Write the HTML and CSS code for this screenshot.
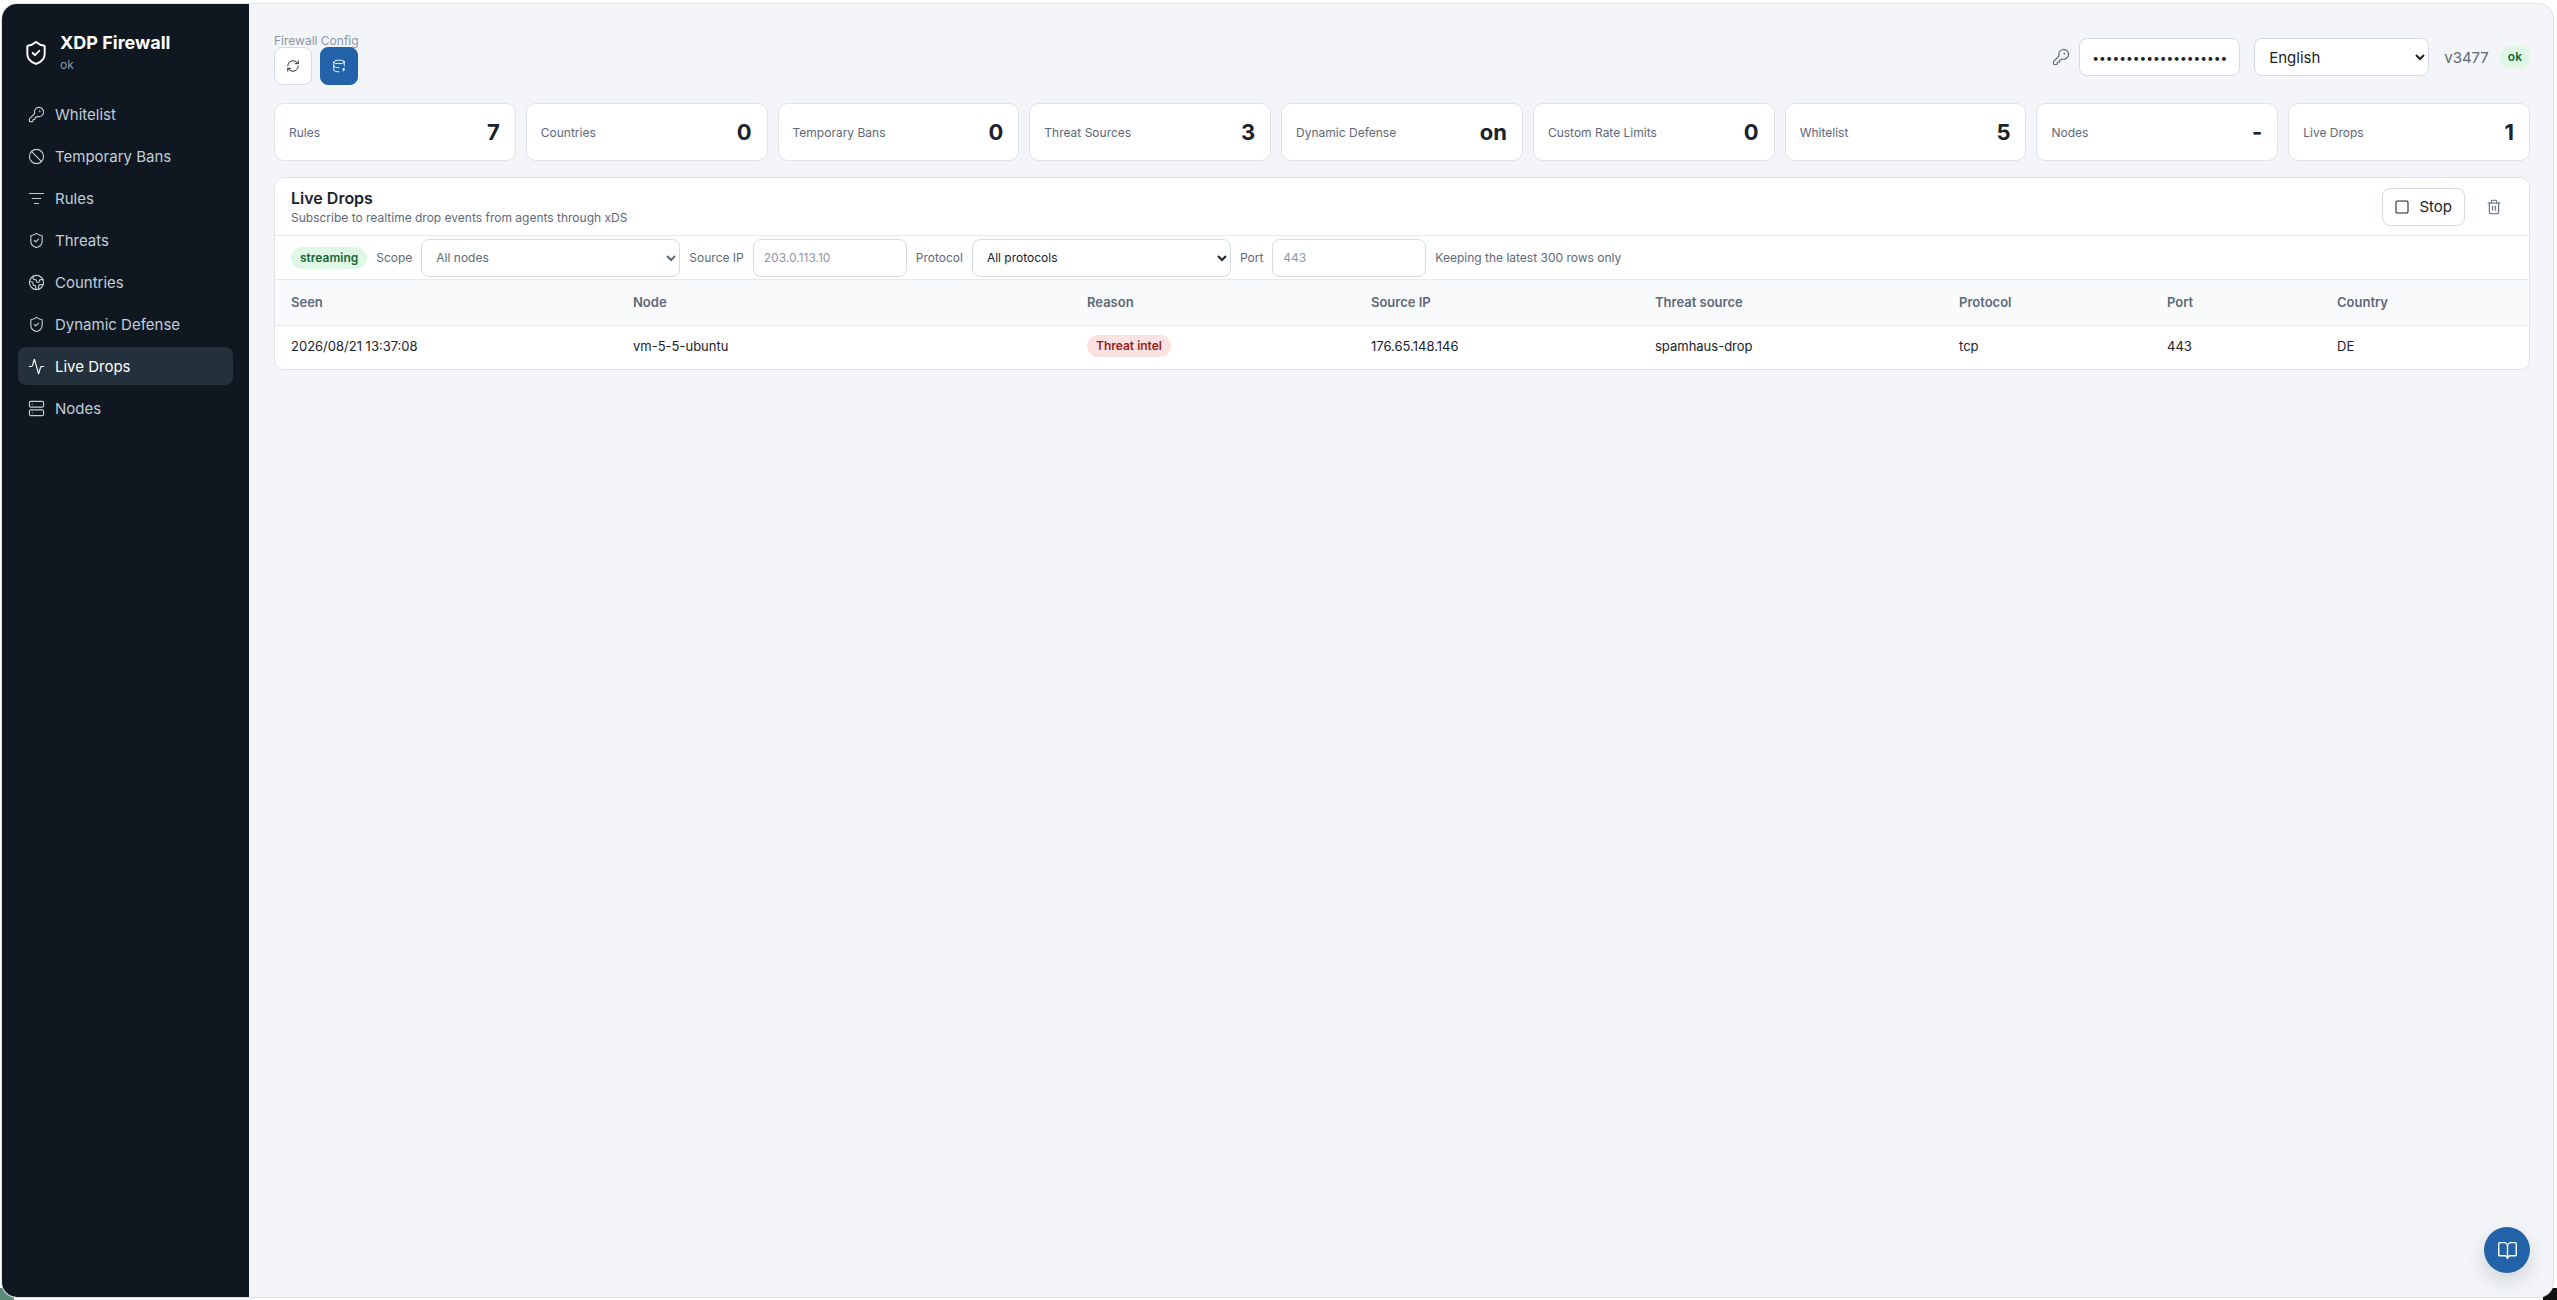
FILE: index.html
```html
<!DOCTYPE html>
<html lang="en">

<head>
    <meta charset="utf-8">
    <title>XDP Firewall</title>
    <link rel="stylesheet" href="styles.css">
</head>

<body>
    <div class="window">
        <aside class="sidebar">
            <div class="brand">
                <svg class="brand-icon" viewBox="0 0 24 24"><path d="M20 13c0 5-3.5 7.5-7.66 8.95a1 1 0 0 1-.67-.01C7.5 20.5 4 18 4 13V6a1 1 0 0 1 1-1c2 0 4.5-1.2 6.24-2.72a1.17 1.17 0 0 1 1.52 0C14.51 3.81 17 5 19 5a1 1 0 0 1 1 1z"/><path d="m9 12 2 2 4-4"/></svg>
                <div>
                    <div class="brand-name">XDP Firewall</div>
                    <div class="brand-status">ok</div>
                </div>
            </div>
            <nav class="nav">
                <a class="nav-item"><svg viewBox="0 0 24 24"><path d="M2.586 17.414A2 2 0 0 0 2 18.828V21a1 1 0 0 0 1 1h3a1 1 0 0 0 1-1v-1a1 1 0 0 1 1-1h1a1 1 0 0 0 1-1v-1a1 1 0 0 1 1-1h.172a2 2 0 0 0 1.414-.586l.814-.814a6.5 6.5 0 1 0-4-4z"/><circle cx="16.5" cy="7.5" r=".5"/></svg>Whitelist</a>
                <a class="nav-item"><svg viewBox="0 0 24 24"><circle cx="12" cy="12" r="10"/><path d="m4.9 4.9 14.2 14.2"/></svg>Temporary Bans</a>
                <a class="nav-item"><svg viewBox="0 0 24 24"><path d="M2 5h20"/><path d="M6 12h12"/><path d="M9 19h6"/></svg>Rules</a>
                <a class="nav-item"><svg viewBox="0 0 24 24"><path d="M20 13c0 5-3.5 7.5-7.66 8.95a1 1 0 0 1-.67-.01C7.5 20.5 4 18 4 13V6a1 1 0 0 1 1-1c2 0 4.5-1.2 6.24-2.72a1.17 1.17 0 0 1 1.52 0C14.51 3.81 17 5 19 5a1 1 0 0 1 1 1z"/><path d="m9 12 2 2 4-4"/></svg>Threats</a>
                <a class="nav-item"><svg viewBox="0 0 24 24"><circle cx="12" cy="12" r="10"/><path d="M21.54 15H17a2 2 0 0 0-2 2v4.54"/><path d="M7 3.34V5a3 3 0 0 0 3 3a2 2 0 0 1 2 2c0 1.1.9 2 2 2a2 2 0 0 0 2-2c0-1.1.9-2 2-2h3.17"/><path d="M11 21.95V18a2 2 0 0 0-2-2a2 2 0 0 1-2-2v-1a2 2 0 0 0-2-2H2.05"/></svg>Countries</a>
                <a class="nav-item"><svg viewBox="0 0 24 24"><path d="M20 13c0 5-3.5 7.5-7.66 8.95a1 1 0 0 1-.67-.01C7.5 20.5 4 18 4 13V6a1 1 0 0 1 1-1c2 0 4.5-1.2 6.24-2.72a1.17 1.17 0 0 1 1.52 0C14.51 3.81 17 5 19 5a1 1 0 0 1 1 1z"/><path d="m9 12 2 2 4-4"/></svg>Dynamic Defense</a>
                <a class="nav-item active"><svg viewBox="0 0 24 24"><path d="M22 12h-2.48a2 2 0 0 0-1.93 1.46l-2.35 8.36a.25.25 0 0 1-.48 0L9.24 2.18a.25.25 0 0 0-.48 0l-2.35 8.36A2 2 0 0 1 4.49 12H2"/></svg>Live Drops</a>
                <a class="nav-item"><svg viewBox="0 0 24 24"><rect width="20" height="8" x="2" y="2" rx="2"/><rect width="20" height="8" x="2" y="14" rx="2"/><path d="M6 6h.01"/><path d="M6 18h.01"/></svg>Nodes</a>
            </nav>
        </aside>

        <main class="main">
            <header class="topbar">
                <div>
                    <div class="config-label">Firewall Config</div>
                    <div class="config-buttons">
                        <button class="icon-btn"><svg viewBox="0 0 24 24"><path d="M3 12a9 9 0 0 1 9-9 9.75 9.75 0 0 1 6.74 2.74L21 8"/><path d="M21 3v5h-5"/><path d="M21 12a9 9 0 0 1-9 9 9.75 9.75 0 0 1-6.74-2.74L3 16"/><path d="M8 16H3v5"/></svg></button>
                        <button class="icon-btn primary"><svg viewBox="0 0 24 24"><ellipse cx="12" cy="5" rx="9" ry="3"/><path d="M3 5v14a9 3 0 0 0 9 3"/><path d="M21 5v6"/><path d="M3 12a9 3 0 0 0 9 3"/><path d="m21 15-3 3h4l-3 3"/></svg></button>
                    </div>
                </div>
                <div class="topbar-right">
                    <svg class="key-icon" viewBox="0 0 24 24"><path d="M2.586 17.414A2 2 0 0 0 2 18.828V21a1 1 0 0 0 1 1h3a1 1 0 0 0 1-1v-1a1 1 0 0 1 1-1h1a1 1 0 0 0 1-1v-1a1 1 0 0 1 1-1h.172a2 2 0 0 0 1.414-.586l.814-.814a6.5 6.5 0 1 0-4-4z"/><circle cx="16.5" cy="7.5" r=".5"/></svg>
                    <input class="field token" type="password" value="xxxxxxxxxxxxxxxxxxxx">
                    <select class="field lang"><option>English</option></select>
                    <span class="version">v3477</span>
                    <span class="pill ok small">ok</span>
                </div>
            </header>

            <section class="stats">
                <div class="stat"><span>Rules</span><b>7</b></div>
                <div class="stat"><span>Countries</span><b>0</b></div>
                <div class="stat"><span>Temporary Bans</span><b>0</b></div>
                <div class="stat"><span>Threat Sources</span><b>3</b></div>
                <div class="stat"><span>Dynamic Defense</span><b>on</b></div>
                <div class="stat"><span>Custom Rate Limits</span><b>0</b></div>
                <div class="stat"><span>Whitelist</span><b>5</b></div>
                <div class="stat"><span>Nodes</span><b>-</b></div>
                <div class="stat"><span>Live Drops</span><b>1</b></div>
            </section>

            <section class="panel">
                <div class="panel-head">
                    <div>
                        <h2>Live Drops</h2>
                        <p>Subscribe to realtime drop events from agents through xDS</p>
                    </div>
                    <div class="panel-actions">
                        <button class="stop-btn"><svg viewBox="0 0 24 24"><rect width="18" height="18" x="3" y="3" rx="2"/></svg>Stop</button>
                        <button class="trash-btn"><svg viewBox="0 0 24 24"><path d="M10 11v6"/><path d="M14 11v6"/><path d="M19 6v14a2 2 0 0 1-2 2H7a2 2 0 0 1-2-2V6"/><path d="M3 6h18"/><path d="M8 6V4a2 2 0 0 1 2-2h4a2 2 0 0 1 2 2v2"/></svg></button>
                    </div>
                </div>
                <div class="filters">
                    <span class="pill ok">streaming</span>
                    <label>Scope</label>
                    <select class="field filter-select muted"><option>All nodes</option></select>
                    <label>Source IP</label>
                    <input class="field filter-input" placeholder="203.0.113.10">
                    <label>Protocol</label>
                    <select class="field filter-select"><option>All protocols</option></select>
                    <label>Port</label>
                    <input class="field filter-input" placeholder="443">
                    <label class="hint">Keeping the latest 300 rows only</label>
                </div>
                <table class="drops">
                    <thead>
                        <tr>
                            <th class="col-seen">Seen</th>
                            <th class="col-node">Node</th>
                            <th class="col-reason">Reason</th>
                            <th class="col-ip">Source IP</th>
                            <th class="col-threat">Threat source</th>
                            <th class="col-proto">Protocol</th>
                            <th class="col-port">Port</th>
                            <th>Country</th>
                        </tr>
                    </thead>
                    <tbody>
                        <tr>
                            <td>2026/08/21 13:37:08</td>
                            <td>vm-5-5-ubuntu</td>
                            <td><span class="pill danger">Threat intel</span></td>
                            <td>176.65.148.146</td>
                            <td>spamhaus-drop</td>
                            <td>tcp</td>
                            <td>443</td>
                            <td>DE</td>
                        </tr>
                    </tbody>
                </table>
            </section>

            <button class="help-btn"><svg viewBox="0 0 24 24"><path d="M12 7v14"/><path d="M3 18a1 1 0 0 1-1-1V4a1 1 0 0 1 1-1h5a4 4 0 0 1 4 4 4 4 0 0 1 4-4h5a1 1 0 0 1 1 1v13a1 1 0 0 1-1 1h-6a3 3 0 0 0-3 3 3 3 0 0 0-3-3z"/></svg></button>
        </main>
    </div>
</body>

</html>
```

FILE: styles.css
```css
* {
    box-sizing: border-box;
}

html,
body {
    height: 100%;
}

body {
    margin: 0;
    padding: 4px 4px 3px 2px;
    /* bits of the desktop showing at the bottom corners */
    background:
        linear-gradient(#5c8b78, #5c8b78) left bottom / 14px 12px no-repeat,
        linear-gradient(#111, #111) right bottom / 14px 12px no-repeat,
        #fff;
    font-family: Inter, "Liberation Sans", sans-serif;
    color: #1a222c;
    overflow: hidden;
}

svg {
    fill: none;
    stroke: currentColor;
    stroke-width: 2;
    stroke-linecap: round;
    stroke-linejoin: round;
}

.window {
    position: relative;
    display: flex;
    height: 100%;
    background: #f3f5f8;
    border-radius: 15px;
    overflow: hidden;
    box-shadow: 0 0 0 1px #dfe2e6;
}

.sidebar {
    flex: none;
    width: 247px;
    padding: 27px 16px;
    background: #0f1821;
    color: #c3ccd8;
}

.brand {
    display: flex;
    align-items: center;
    gap: 11px;
    height: 44px;
    padding-left: 5px;
    margin-bottom: 20px;
}

.brand-icon {
    width: 26px;
    height: 26px;
    stroke-width: 1.8;
    color: #fff;
}

.brand-name {
    font-size: 18px;
    line-height: 24px;
    font-weight: 700;
    color: #fff;
}

.brand-status {
    font-size: 12px;
    line-height: 20px;
    color: #8c97a5;
}

.nav {
    display: flex;
    flex-direction: column;
    gap: 4px;
}

.nav-item {
    display: flex;
    align-items: center;
    gap: 10px;
    height: 38px;
    padding-left: 10px;
    border-radius: 8px;
    font-size: 15px;
}

.nav-item svg {
    width: 17px;
    height: 17px;
    stroke-width: 1.6;
}

.nav-item.active {
    background: #24313d;
    color: #fff;
}

.main {
    flex: 1;
    min-width: 0;
    padding: 30px 23px 0 25px;
    position: relative;
}

.topbar {
    display: flex;
    justify-content: space-between;
    height: 51px;
    margin-bottom: 18px;
}

.config-label {
    font-size: 12px;
    line-height: 13px;
    color: #8c97a5;
}

.config-buttons {
    display: flex;
    gap: 8px;
}

.icon-btn {
    display: flex;
    align-items: center;
    justify-content: center;
    width: 38px;
    height: 38px;
    padding: 0;
    background: #fff;
    border: 1px solid #d5dbe3;
    border-radius: 8px;
    color: #1a222c;
}

.icon-btn svg {
    width: 14px;
    height: 14px;
    stroke-width: 1.6;
}

.icon-btn.primary {
    background: #2262a8;
    border-color: #2262a8;
    color: #fff;
}

.topbar-right {
    display: flex;
    align-items: center;
    align-self: flex-start;
    padding-top: 4px;
}

.key-icon {
    width: 18px;
    height: 18px;
    margin-right: 9px;
    stroke-width: 1.6;
    color: #5d6977;
}

.field {
    height: 38px;
    background: #fff;
    border: 1px solid #d5dbe3;
    border-radius: 8px;
    font-family: inherit;
    color: #1a222c;
}

.token {
    width: 161px;
    padding: 0 8px 0 12px;
    margin-right: 14px;
    font-size: 12px;
}

.lang {
    width: 175px;
    padding: 0 8px 0 10px;
    margin-right: 15px;
    font-size: 15px;
}

.version {
    margin-right: 11px;
    font-size: 15px;
    color: #5d6977;
}

.pill {
    display: inline-block;
    border-radius: 999px;
    font-size: 12px;
    line-height: 22px;
    padding: 0 9px;
    font-weight: 600;
}

.pill.ok {
    background: #dff8e6;
    color: #166534;
}

.pill.small {
    padding: 0 8px;
}

.pill.danger {
    background: #fbe2e2;
    color: #991b1b;
}

.stats {
    display: grid;
    grid-template-columns: repeat(9, 1fr);
    gap: 10px;
    margin-bottom: 16px;
}

.stat {
    display: flex;
    justify-content: space-between;
    align-items: center;
    height: 58px;
    padding: 0 15px 0 14px;
    background: #fff;
    border: 1px solid #dfe3e8;
    border-radius: 10px;
}

.stat span {
    font-size: 12px;
    color: #5d6977;
}

.stat b {
    font-size: 22px;
    font-weight: 700;
}

.panel {
    background: #fff;
    border: 1px solid #dfe3e8;
    border-radius: 10px;
    overflow: hidden;
}

.panel-head {
    display: flex;
    justify-content: space-between;
    align-items: center;
    height: 58px;
    padding: 0 16px;
    border-bottom: 1px solid #e6e9ee;
}

.panel-head h2 {
    margin: 0;
    font-size: 16px;
    line-height: 22px;
    font-weight: 600;
}

.panel-head p {
    margin: 0;
    font-size: 12px;
    line-height: 18px;
    color: #5d6977;
}

.panel-actions {
    display: flex;
    align-items: center;
    gap: 10px;
}

.stop-btn {
    display: flex;
    align-items: center;
    gap: 9px;
    height: 38px;
    padding: 0 12px 0 11px;
    background: #fff;
    border: 1px solid #d5dbe3;
    border-radius: 8px;
    font-family: inherit;
    font-size: 15px;
    color: #1a222c;
}

.stop-btn svg {
    width: 16px;
    height: 16px;
    stroke-width: 1.6;
}

.trash-btn {
    display: flex;
    align-items: center;
    justify-content: center;
    width: 38px;
    height: 38px;
    padding: 0;
    background: none;
    border: 0;
    color: #5d6977;
}

.trash-btn svg {
    width: 16px;
    height: 16px;
    stroke-width: 1.6;
}

.filters {
    display: flex;
    align-items: center;
    gap: 9px;
    height: 44px;
    padding: 0 16px;
    border-bottom: 1px solid #e6e9ee;
}

.filters label {
    font-size: 12px;
    color: #5d6977;
}

.filter-select {
    width: 259px;
    padding: 0 4px 0 10px;
    font-size: 12px;
}

.filter-select.muted {
    color: #5d6977;
}

.filter-input {
    width: 154px;
    padding: 0 10px;
    font-size: 12px;
}

.filter-input::placeholder {
    color: #8c97a5;
}

.drops {
    width: 100%;
    border-collapse: collapse;
    table-layout: fixed;
    font-size: 13px;
}

.drops th {
    height: 45px;
    padding: 0 16px;
    background: #f9fafc;
    border-bottom: 1px solid #e6e9ee;
    text-align: left;
    font-weight: 600;
    color: #5d6977;
}

.drops td {
    height: 44px;
    padding: 0 16px 2px;
}

.col-seen { width: 342px; }
.col-node { width: 454px; }
.col-reason { width: 284px; }
.col-ip { width: 284px; }
.col-threat { width: 304px; }
.col-proto { width: 208px; }
.col-port { width: 170px; }

.help-btn {
    position: absolute;
    right: 23px;
    bottom: 24px;
    display: flex;
    align-items: center;
    justify-content: center;
    width: 46px;
    height: 46px;
    padding: 0;
    background: #2262a8;
    border: 0;
    border-radius: 50%;
    box-shadow: 0 8px 20px rgba(15, 24, 33, .15);
    color: #fff;
}

.help-btn svg {
    width: 21px;
    height: 21px;
    stroke-width: 1.6;
}
```
